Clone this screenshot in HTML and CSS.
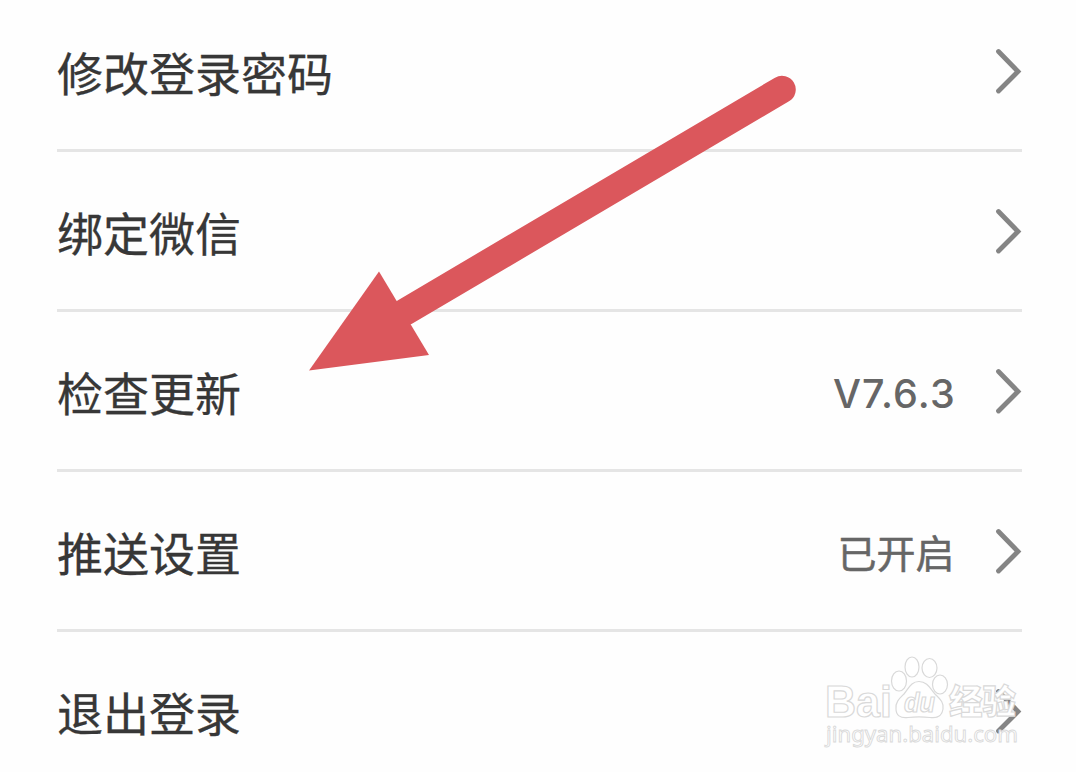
FILE: index.html
```html
<!DOCTYPE html>
<html lang="zh-CN">
<head>
    <meta charset="UTF-8">
    <meta name="viewport" content="width=device-width, initial-scale=1.0">
    <title>设置</title>
    <link rel="stylesheet" href="styles.css">
</head>
<body>
    <ul class="settings">
        <li class="row">
            <span class="label">修改登录密码</span>
            <svg class="chevron" viewBox="0 0 28 46"><path d="M4.500 3.500L24 23.500L4.500 43"/></svg>
        </li>
        <li class="row">
            <span class="label">绑定微信</span>
            <svg class="chevron" viewBox="0 0 28 46"><path d="M4.500 3.500L24 23.500L4.500 43"/></svg>
        </li>
        <li class="row">
            <span class="label">检查更新</span>
            <span class="value version">V7.6.3</span>
            <svg class="chevron" viewBox="0 0 28 46"><path d="M4.500 3.500L24 23.500L4.500 43"/></svg>
        </li>
        <li class="row">
            <span class="label">推送设置</span>
            <span class="value">已开启</span>
            <svg class="chevron" viewBox="0 0 28 46"><path d="M4.500 3.500L24 23.500L4.500 43"/></svg>
        </li>
        <li class="row">
            <span class="label">退出登录</span>
            <svg class="chevron" viewBox="0 0 28 46"><path d="M4.500 3.500L24 23.500L4.500 43"/></svg>
        </li>
    </ul>

    <!-- arrow pointing at the update row -->
    <svg class="arrow" viewBox="0 0 488 300">
        <path class="shaft" d="M96 240L473 17.500"/>
        <path class="head" d="M0 298.500L70 199.500L120 283Z"/>
    </svg>

    <!-- watermark -->
    <svg class="watermark" viewBox="0 0 240 132">
        <text class="brand" x="15" y="77" textLength="67" lengthAdjust="spacingAndGlyphs">Bai</text>
        <ellipse cx="89" cy="41" rx="7.500" ry="10"/>
        <ellipse cx="102" cy="27" rx="7" ry="10"/>
        <ellipse cx="119.500" cy="28" rx="7.500" ry="9.500"/>
        <ellipse cx="130" cy="44.500" rx="7.500" ry="9.500"/>
        <path d="M109 41.500C117 41.500 120 48 125 54C130 59 134 62 133 69C132 76 127 78.500 120 77.500C112 76.500 106 76.500 98 77.500C90 78.500 86 75 86 69C85 62 90 58 94 54C99 48 101 41.500 109 41.500Z"/>
        <text class="du" x="94" y="72" textLength="31" lengthAdjust="spacingAndGlyphs">du</text>
        <text class="jy" x="139" y="74" textLength="67" lengthAdjust="spacingAndGlyphs">经验</text>
        <text class="site" x="16" y="102" textLength="192" lengthAdjust="spacingAndGlyphs">jingyan.baidu.com</text>
    </svg>
</body>
</html>
```
FILE: styles.css
```css
* {
    box-sizing: border-box;
}
body {
    position: relative;
    height: 772px;
    margin: 0;
    overflow: hidden;
    background: #fefefe;
    font-family: "Noto Sans CJK SC", sans-serif;
}
.settings {
    list-style: none;
    margin: -8px 54.5px 0 57px;
    padding: 0;
}
.row {
    display: flex;
    align-items: center;
    height: 160px;
    border-bottom: 3px solid #e5e5e5;
}
.label {
    flex: 1;
    padding-top: 1px;
    font-size: 46px;
    line-height: 60px;
    color: #373737;
    -webkit-text-stroke: 0.3px #373737;
}
.value {
    margin-right: 39px;
    font-size: 39px;
    line-height: 52px;
    color: #666;
    -webkit-text-stroke: 0.5px #666;
}
.version {
    padding-top: 7px;
    margin-right: 37.5px;
    font-family: Inter, sans-serif;
    font-size: 39.5px;
    font-weight: 500;
    letter-spacing: 1.2px;
    -webkit-text-stroke: 0;
}
.chevron {
    width: 28px;
    height: 46px;
    fill: none;
    stroke: #858585;
    stroke-width: 4.8;
    stroke-linecap: round;
}
.arrow {
    position: absolute;
    left: 309px;
    top: 72px;
    width: 488px;
    height: 300px;
}
.shaft {
    stroke: #db575c;
    stroke-width: 27.5;
    stroke-linecap: round;
}
.head {
    fill: #db575c;
}
.watermark {
    position: absolute;
    left: 810px;
    top: 640px;
    width: 240px;
    height: 132px;
    fill: #fff;
    stroke: #d9d9d9;
    stroke-width: 1.2;
}
.brand {
    font: bold 45px "Liberation Sans", sans-serif;
}
.du {
    font: bold italic 27px "Liberation Sans", sans-serif;
}
.jy {
    font: 900 34px "Noto Sans CJK SC", sans-serif;
}
.site {
    font: 22px "Noto Sans", sans-serif;
    stroke-width: 0.9;
}
```
